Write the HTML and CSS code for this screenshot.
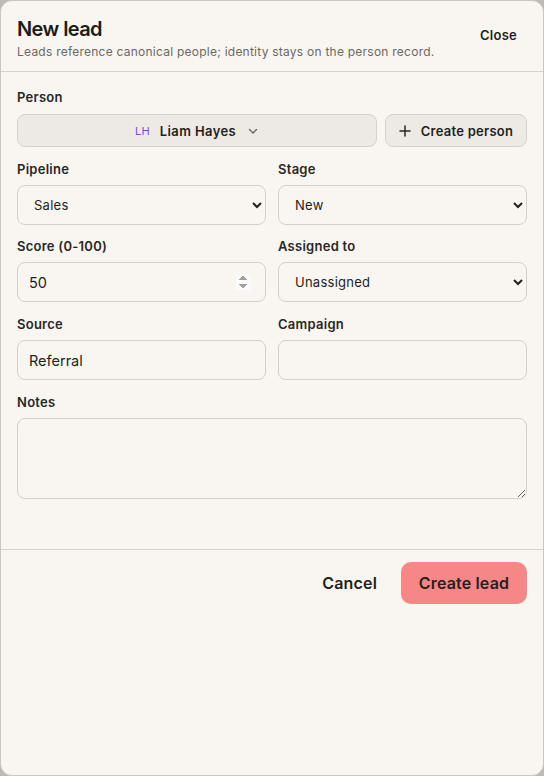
FILE: index.html
```html
<!DOCTYPE html>
<html lang="en">
<head>
<meta charset="utf-8">
<title>New lead</title>
<link rel="stylesheet" href="styles.css">
</head>
<body>
<div class="dialog">
  <header class="dialog-header">
    <div class="titles">
      <h1 class="title">New lead</h1>
      <p class="subtitle">Leads reference canonical people; identity stays on the person record.</p>
    </div>
    <button class="link-btn" type="button">Close</button>
  </header>
  <div class="dialog-body">
    <div class="field">
      <label class="label">Person</label>
      <div class="person-row">
        <button class="person-picker" type="button">
          <span class="initials">LH</span>
          <span class="person-name">Liam Hayes</span>
          <svg class="chev" width="12" height="12" viewBox="0 0 12 12" fill="none" stroke="#6b6560" stroke-width="1.4" stroke-linecap="round" stroke-linejoin="round"><path d="M2.5 4.5 6 8l3.5-3.5"/></svg>
        </button>
        <button class="create-person" type="button">
          <svg width="12" height="12" viewBox="0 0 12 12" fill="none" stroke="#2b2623" stroke-width="1.5" stroke-linecap="round"><path d="M6 1v10M1 6h10"/></svg>
          <span>Create person</span>
        </button>
      </div>
    </div>
    <div class="grid">
      <div class="field">
        <label class="label">Pipeline</label>
        <select class="control select"><option>Sales</option></select>
      </div>
      <div class="field">
        <label class="label">Stage</label>
        <select class="control select"><option>New</option></select>
      </div>
      <div class="field">
        <label class="label">Score (0-100)</label>
        <input class="control input number" type="number" value="50">
      </div>
      <div class="field">
        <label class="label">Assigned to</label>
        <select class="control select"><option>Unassigned</option></select>
      </div>
      <div class="field">
        <label class="label">Source</label>
        <input class="control input" type="text" value="Referral">
      </div>
      <div class="field">
        <label class="label">Campaign</label>
        <input class="control input" type="text" value="">
      </div>
      <div class="field span2">
        <label class="label">Notes</label>
        <textarea class="control textarea"></textarea>
      </div>
    </div>
  </div>
  <footer class="dialog-footer">
    <button class="btn-ghost" type="button">Cancel</button>
    <button class="btn-primary" type="button">Create lead</button>
  </footer>
</div>
</body>
</html>
```
FILE: styles.css
```css
* { box-sizing: border-box; }
html, body { margin: 0; padding: 0; }
body {
  background: #bdb9b3;
  font-family: Inter, "Noto Sans", sans-serif;
  color: #231f1c;
}
.dialog {
  width: 544px;
  height: 776px;
  background: #f9f6f2;
  border: 1px solid #cbc6bf;
  border-radius: 12px;
  overflow: hidden;
  display: flex;
  flex-direction: column;
}
.dialog-header {
  display: flex;
  align-items: flex-start;
  justify-content: space-between;
  padding: 15px 16px 11px 16px;
  border-bottom: 1px solid #d6d1ca;
}
.title {
  margin: 0;
  font-size: 20px;
  line-height: 26px;
  font-weight: 600;
  letter-spacing: -0.03em;
  color: #1f1b18;
}
.subtitle {
  margin: 2px 0 0 0;
  font-size: 12px;
  line-height: 16px;
  letter-spacing: 0.02em;
  color: #6e6862;
}
.link-btn {
  background: none;
  border: 0;
  padding: 6px 10px;
  font: 600 13px/16px Inter, sans-serif;
  letter-spacing: 0.02em;
  color: #231f1c;
  margin-top: 5px;
}
.dialog-body {
  padding: 17px 16px 50px 16px;
  display: flex;
  flex-direction: column;
  gap: 13.7px;
}
.field {
  display: flex;
  flex-direction: column;
  gap: 8px;
  min-width: 0;
}
.label {
  font-size: 13px;
  line-height: 16px;
  font-weight: 600;
  letter-spacing: 0.02em;
  color: #2b2623;
}
.person-row {
  display: flex;
  gap: 8px;
  margin-top: 1px;
}
.person-picker {
  flex: 1;
  height: 33px;
  display: flex;
  align-items: center;
  justify-content: center;
  gap: 10px;
  background: #edeae5;
  border: 1px solid #d6d1ca;
  border-radius: 8px;
  font-family: Inter, sans-serif;
  padding: 0 12px;
}
.initials {
  font-size: 11px;
  color: #6b55d6;
  letter-spacing: 0.02em;
}
.person-name {
  font-size: 13px;
  font-weight: 600;
  letter-spacing: 0.03em;
  color: #231f1c;
}
.chev { margin-left: 1px; }
.create-person {
  width: 142px;
  height: 33px;
  display: flex;
  align-items: center;
  justify-content: center;
  gap: 10px;
  background: #edeae5;
  border: 1px solid #d6d1ca;
  border-radius: 8px;
  font: 600 13px/16px Inter, sans-serif;
  letter-spacing: 0.02em;
  color: #231f1c;
  padding: 0 10px;
}
.grid {
  display: grid;
  grid-template-columns: 1fr 1fr;
  column-gap: 12px;
  row-gap: 13.7px;
}
.span2 { grid-column: 1 / span 2; }
.control {
  width: 100%;
  border: 1px solid #d4cfc8;
  border-radius: 8px;
  background: #f9f6f2;
  color: #231f1c;
  font-family: Inter, sans-serif;
}
.select {
  height: 40px;
  padding: 0 8px 0 12px;
  font-size: 13px;
  letter-spacing: 0.02em;
}
.input {
  height: 40px;
  padding: 0 12px 0 11px;
  font-size: 14.5px;
}
.number {
  padding-right: 14px;
}
.number::-webkit-inner-spin-button {
  opacity: 0.8;
  height: 16px;
}
.textarea {
  height: 81px;
  resize: vertical;
  padding: 8px 12px;
  font-size: 14px;
}
.dialog-footer {
  display: flex;
  justify-content: flex-end;
  align-items: center;
  gap: 12px;
  padding: 12px 16px;
  border-top: 1px solid #d6d1ca;
}
.btn-ghost {
  background: none;
  border: 0;
  padding: 0 12px;
  height: 42px;
  font: 600 16px/20px Inter, sans-serif;
  letter-spacing: 0.01em;
  color: #231f1c;
}
.btn-primary {
  height: 42px;
  width: 126px;
  background: #f78686;
  border: 0;
  border-radius: 10px;
  font: 600 16px/20px Inter, sans-serif;
  letter-spacing: 0.01em;
  color: #2a1d1d;
}
```
